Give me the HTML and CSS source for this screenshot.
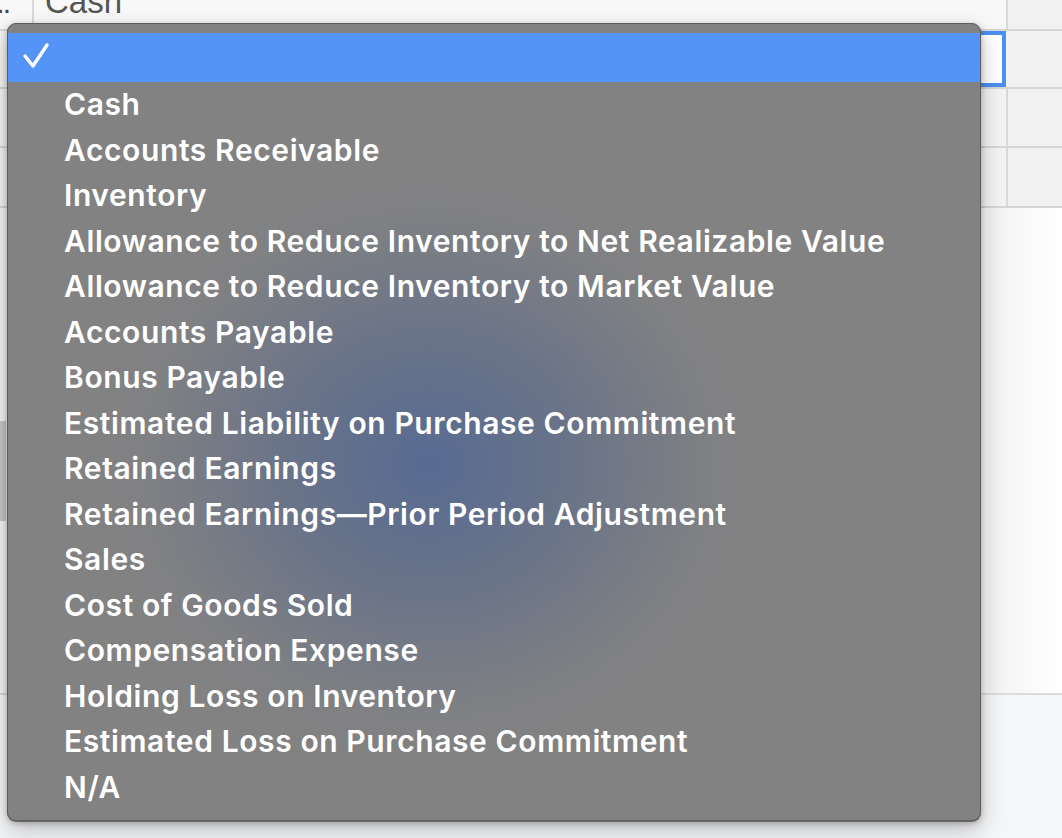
FILE: index.html
```html
<!DOCTYPE html>
<html>
<head>
<meta charset="utf-8">
<link rel="stylesheet" href="styles.css">
</head>
<body>
<div class="sheet">
  <div class="row row-top">
    <div class="cell c-left"><span class="frag">...</span></div>
    <div class="cell c-main"><span class="top-text">Cash</span></div>
    <div class="cell c-right"></div>
  </div>
  <div class="row row-mid">
    <div class="cell c-left"></div>
    <div class="cell c-main selected"></div>
    <div class="cell c-right"></div>
  </div>
  <div class="row row-mid">
    <div class="cell c-left"></div>
    <div class="cell c-main"></div>
    <div class="cell c-right"></div>
  </div>
  <div class="row row-mid">
    <div class="cell c-left"></div>
    <div class="cell c-main"></div>
    <div class="cell c-right"></div>
  </div>
  <div class="blank">
    <div class="side-strip"></div>
  </div>
  <div class="footer"></div>
</div>

<div class="menu">
  <div class="glow"></div>
  <ul class="items">
    <li class="item current">
      <svg class="check" width="30" height="30" viewBox="0 0 30 30">
        <polyline points="3,14 11,24 25,3" fill="none" stroke="#fff" stroke-width="3.4" stroke-linecap="round" stroke-linejoin="round"/>
      </svg>
    </li>
    <li class="item">Cash</li>
    <li class="item">Accounts Receivable</li>
    <li class="item">Inventory</li>
    <li class="item">Allowance to Reduce Inventory to Net Realizable Value</li>
    <li class="item">Allowance to Reduce Inventory to Market Value</li>
    <li class="item">Accounts Payable</li>
    <li class="item">Bonus Payable</li>
    <li class="item">Estimated Liability on Purchase Commitment</li>
    <li class="item">Retained Earnings</li>
    <li class="item">Retained Earnings—Prior Period Adjustment</li>
    <li class="item">Sales</li>
    <li class="item">Cost of Goods Sold</li>
    <li class="item">Compensation Expense</li>
    <li class="item">Holding Loss on Inventory</li>
    <li class="item">Estimated Loss on Purchase Commitment</li>
    <li class="item">N/A</li>
  </ul>
</div>
</body>
</html>
```

FILE: styles.css
```css
html, body {
  margin: 0;
  padding: 0;
  width: 1062px;
  height: 838px;
  overflow: hidden;
  background: #ffffff;
  font-family: Inter, "Liberation Sans", sans-serif;
}

.sheet {
  display: flex;
  flex-direction: column;
  width: 1062px;
  height: 838px;
}

.row {
  display: flex;
  border-bottom: 2px solid #d6d6d6;
  box-sizing: border-box;
}

.row-top {
  height: 31px;
  background: #f8f8f8;
}

.row-mid {
  height: 58px;
  background: #f3f3f3;
}

.row-mid:nth-child(3) { height: 59px; }
.row-mid:nth-child(4) { height: 60px; }

.cell {
  box-sizing: border-box;
  height: 100%;
  overflow: hidden;
  position: relative;
}

.c-left {
  width: 34px;
  border-right: 2px solid #d8d8d8;
}

.c-main {
  flex: 1;
  border-right: 2px solid #d8d8d8;
}

.c-right {
  width: 54px;
  background: #f1f1f1;
}

.selected {
  background: #ffffff;
  border: 4px solid #4a8ff2;
  margin-right: 2px;
}

.frag {
  display: block;
  font-size: 30px;
  line-height: 30px;
  color: #444;
  margin-top: -12px;
  margin-left: -10px;
  font-family: "Liberation Sans", sans-serif;
  letter-spacing: -2px;
}

.top-text {
  display: block;
  font-family: "Liberation Sans", sans-serif;
  font-size: 33px;
  line-height: 33px;
  color: #555;
  margin-top: -15px;
  margin-left: 11px;
}

.blank {
  height: 485px;
  background: linear-gradient(to right, #f4f4f4 0px, #ffffff 60px, #ffffff 980px, #f2f2f2 990px, #fafafa 1030px, #ffffff 1062px);
  border-bottom: 2px solid #dcdcdc;
  position: relative;
}

.side-strip {
  width: 6px;
  height: 100px;
  margin-top: 213px;
  background: #c4c6c9;
}

.footer {
  flex: 1;
  background: #f5f6f8;
}

.menu {
  position: absolute;
  left: 7px;
  top: 23px;
  width: 974px;
  height: 798px;
  box-sizing: border-box;
  border-radius: 9px;
  background: #828282;
  border: 1px solid #5c5c5c;
  box-shadow: 0 1px 0 #6a6a6a, 0 10px 24px rgba(0,0,0,0.22), 0 2px 6px rgba(0,0,0,0.25);
  overflow: hidden;
}

.glow {
  position: absolute;
  left: 0;
  top: 0;
  width: 100%;
  height: 100%;
  background: radial-gradient(ellipse 360px 320px at 420px 440px, rgba(82,104,148,0.9) 0%, rgba(90,106,140,0.6) 40%, rgba(120,124,134,0.18) 80%, rgba(130,130,130,0) 100%);
}

.items {
  list-style: none;
  margin: 0;
  padding: 9px 0 0 0;
  position: relative;
}

.item {
  height: 45.5px;
  line-height: 45.5px;
  padding-left: 56px;
  color: #ffffff;
  font-size: 30px;
  font-weight: 600;
  letter-spacing: 0.6px;
  white-space: nowrap;
}

.item.current {
  height: 49px;
  background: #5394f6;
  padding-left: 0;
  position: relative;
}

.check {
  position: absolute;
  left: 14px;
  top: 9px;
}
```
